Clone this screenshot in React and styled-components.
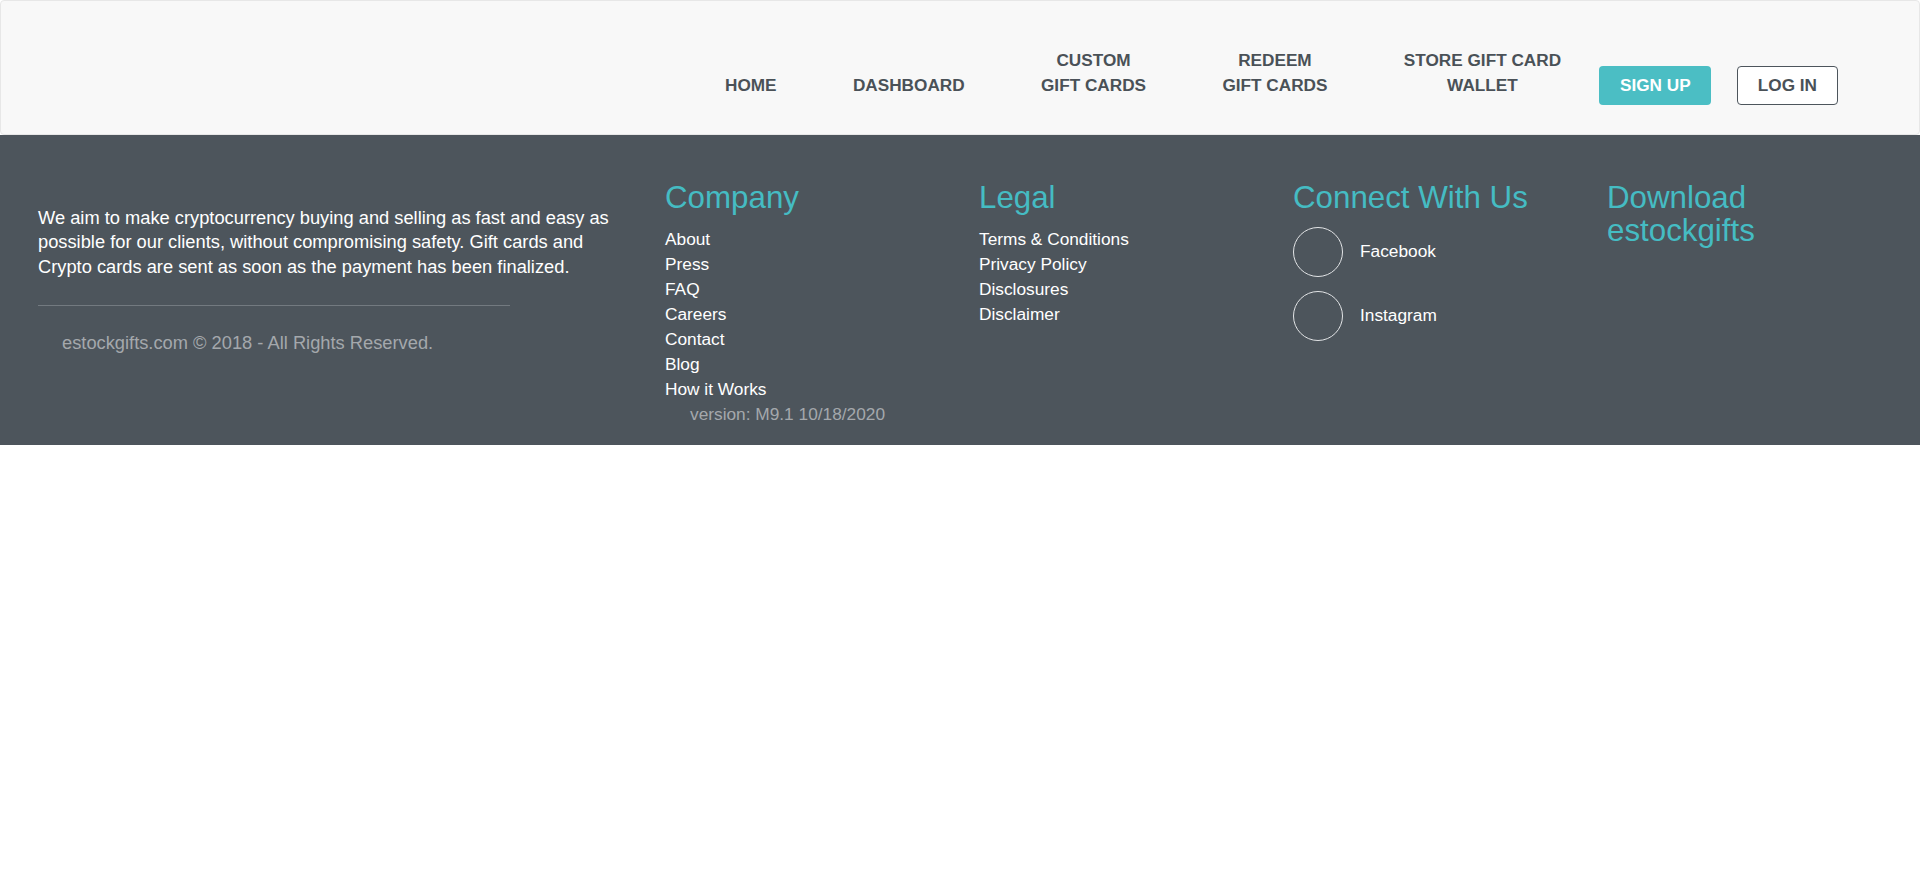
import React from "react";
import styled, { createGlobalStyle } from "styled-components";

const GlobalStyle = createGlobalStyle`
  body {
    margin: 0;
    background: #ffffff;
    font-family: "Liberation Sans", Arial, Helvetica, sans-serif;
  }
  * {
    box-sizing: border-box;
  }
`;

const Navbar = styled.nav`
  height: 135px;
  display: flex;
  justify-content: flex-end;
  align-items: flex-end;
  padding: 0 81px 29.3px 0;
  background-color: #f8f8f8;
  border: 1px solid #e7e7e7;
  border-radius: 4px;
`;

const NavLink = styled.a`
  padding: 7px 38.2px;
  font-size: 17.2px;
  line-height: 25px;
  font-weight: 700;
  color: #4a5157;
  text-align: center;
  text-decoration: none;
  cursor: pointer;
`;

const Button = styled.a`
  margin-left: ${(p) => (p.outline ? "25.5px" : "0")};
  padding: ${(p) => (p.outline ? "6px 20px" : "7px 20.7px")};
  font-size: 17.2px;
  line-height: 25px;
  font-weight: 700;
  border-radius: 4px;
  text-decoration: none;
  cursor: pointer;
  color: ${(p) => (p.outline ? "#4a5157" : "#ffffff")};
  background-color: ${(p) => (p.outline ? "#ffffff" : "#4bbec4")};
  border: ${(p) => (p.outline ? "1px solid #4d555c" : "none")};
`;

const Footer = styled.footer`
  display: grid;
  grid-template-columns: 4fr 2fr 2fr 2fr 2fr;
  align-items: start;
  padding: 45.5px 14px 18px 22px;
  background-color: #4d555c;
`;

const Column = styled.div`
  padding: 0 15px;

  &:first-child {
    padding-left: 16px;
  }
`;

const About = styled.p`
  margin: 25.4px 0 0;
  font-size: 18.3px;
  line-height: 24.5px;
  color: #ffffff;
`;

const Divider = styled.hr`
  width: 79%;
  margin: 25.6px 0 0;
  border: 0;
  border-top: 1px solid #737a80;
`;

const Copyright = styled.div`
  margin-top: 25px;
  padding-left: 24px;
  font-size: 18.3px;
  line-height: 24.5px;
  color: #a4a8ac;
`;

const Heading = styled.h3`
  margin: 0 0 13px;
  font-size: 31.3px;
  line-height: 33px;
  font-weight: 400;
  color: #45bcc3;
`;

const LinkList = styled.ul`
  margin: 0;
  padding: 0;
  list-style: none;
`;

const LinkItem = styled.li`
  font-size: 17.3px;
  line-height: 25px;
  color: #ffffff;
`;

const Version = styled.div`
  padding-left: 25px;
  font-size: 17.3px;
  line-height: 25px;
  color: #a4a8ac;
`;

const Socials = styled.div`
  display: flex;
  flex-direction: column;
  gap: 14px;
  margin-top: 2px;
`;

const SocialRow = styled.a`
  display: flex;
  align-items: center;
  gap: 17px;
  font-size: 17.3px;
  color: #ffffff;
  text-decoration: none;
`;

const Circle = styled.span`
  width: 50px;
  height: 50px;
  border-radius: 50%;
  border: 1px solid #e2e4e6;
`;

const navItems = [
  ["HOME"],
  ["DASHBOARD"],
  ["CUSTOM", "GIFT CARDS"],
  ["REDEEM", "GIFT CARDS"],
  ["STORE GIFT CARD", "WALLET"],
];

const company = ["About", "Press", "FAQ", "Careers", "Contact", "Blog", "How it Works"];
const legal = ["Terms & Conditions", "Privacy Policy", "Disclosures", "Disclaimer"];

export default function App() {
  return (
    <>
      <GlobalStyle />
      <Navbar>
        {navItems.map((lines) => (
          <NavLink key={lines.join(" ")}>
            {lines.map((l, i) => (
              <React.Fragment key={l}>
                {i > 0 && <br />}
                {l}
              </React.Fragment>
            ))}
          </NavLink>
        ))}
        <Button>SIGN UP</Button>
        <Button outline>LOG IN</Button>
      </Navbar>
      <Footer>
        <Column>
          <About>
            We aim to make cryptocurrency buying and selling as fast and easy as
            possible for our clients, without compromising safety. Gift cards and
            Crypto cards are sent as soon as the payment has been finalized.
          </About>
          <Divider />
          <Copyright>estockgifts.com © 2018 - All Rights Reserved.</Copyright>
        </Column>
        <Column>
          <Heading>Company</Heading>
          <LinkList>
            {company.map((c) => (
              <LinkItem key={c}>{c}</LinkItem>
            ))}
          </LinkList>
          <Version>version: M9.1 10/18/2020</Version>
        </Column>
        <Column>
          <Heading>Legal</Heading>
          <LinkList>
            {legal.map((c) => (
              <LinkItem key={c}>{c}</LinkItem>
            ))}
          </LinkList>
        </Column>
        <Column>
          <Heading>Connect With Us</Heading>
          <Socials>
            <SocialRow>
              <Circle />
              Facebook
            </SocialRow>
            <SocialRow>
              <Circle />
              Instagram
            </SocialRow>
          </Socials>
        </Column>
        <Column>
          <Heading>
            Download
            <br />
            estockgifts
          </Heading>
        </Column>
      </Footer>
    </>
  );
}
